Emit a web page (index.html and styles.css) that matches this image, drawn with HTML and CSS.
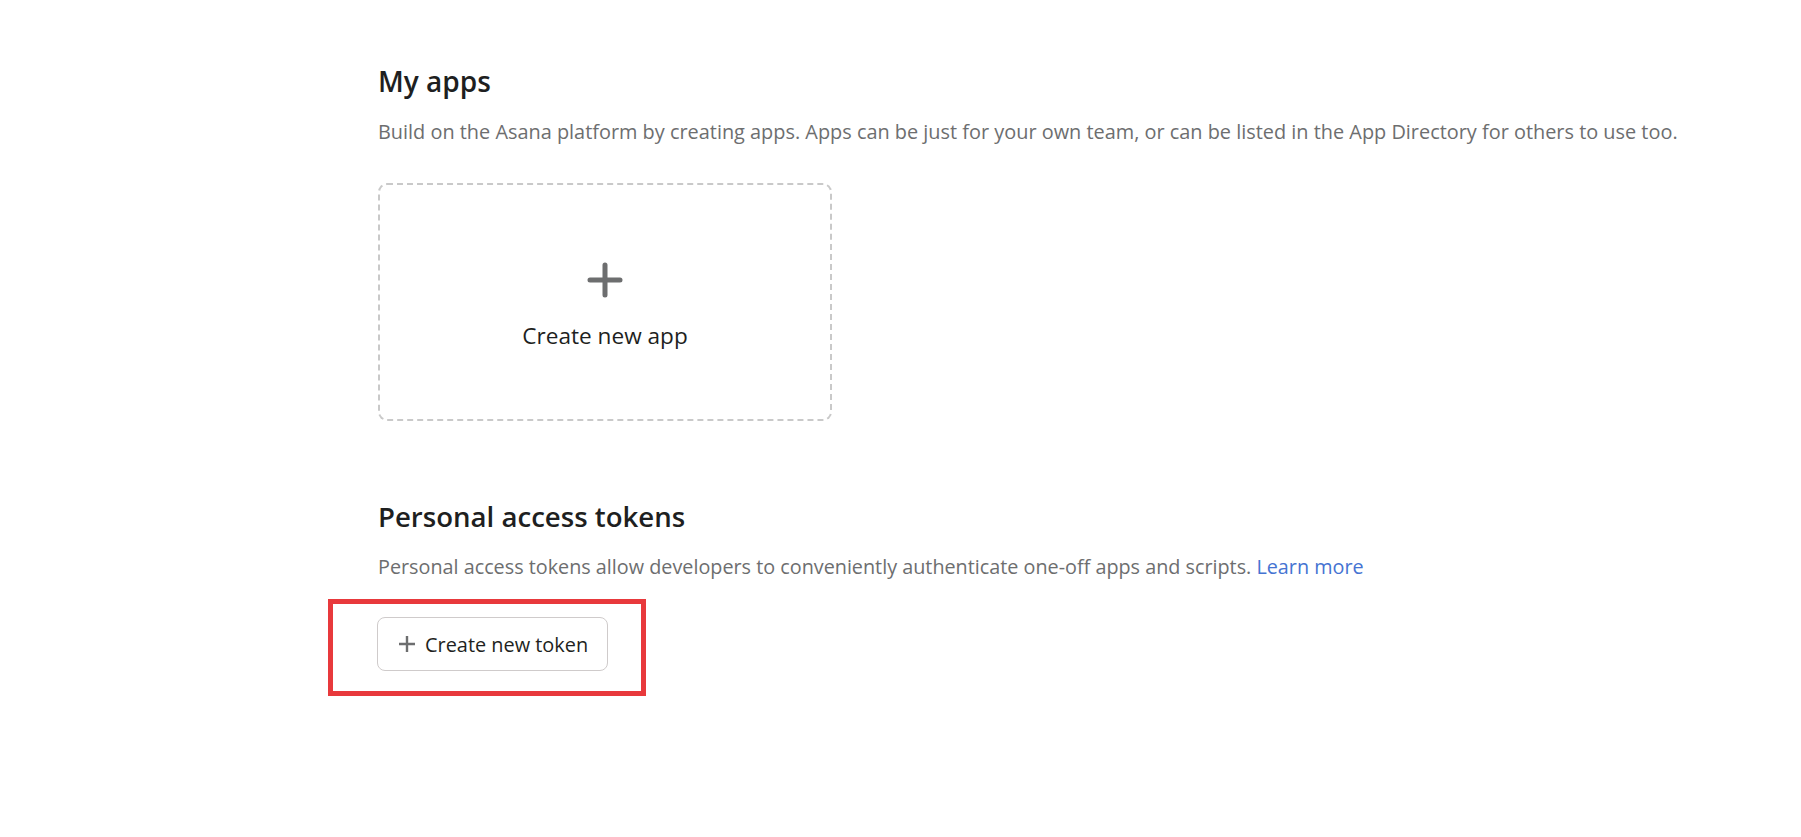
FILE: index.html
```html
<!DOCTYPE html>
<html lang="en">
<head>
    <meta charset="UTF-8">
    <meta name="viewport" content="width=device-width, initial-scale=1.0">
    <title>Developer console</title>
    <link rel="stylesheet" href="styles.css">
</head>
<body>
    <div class="page">
        <section class="section section-apps">
            <h2>My apps</h2>
            <p class="desc">Build on the Asana platform by creating apps. Apps can be just for your own team, or can be listed in the App Directory for others to use too.</p>
            <button class="new-app">
                <svg class="big-plus" width="36" height="36" viewBox="0 0 36 36">
                    <path d="M18 3 V33 M3 18 H33" stroke="#6d6e6f" stroke-width="5" stroke-linecap="round" fill="none"/>
                </svg>
                <span>Create new app</span>
            </button>
        </section>
        <section class="section section-tokens">
            <h2>Personal access tokens</h2>
            <p class="desc">Personal access tokens allow developers to conveniently authenticate one-off apps and scripts. <a href="#">Learn more</a></p>
            <div class="highlight">
                <button class="btn-token">
                    <svg width="18" height="18" viewBox="0 0 18 18">
                        <path d="M9 1 V17 M1 9 H17" stroke="#6d6e6f" stroke-width="2.4" fill="none"/>
                    </svg>
                    <span>Create new token</span>
                </button>
            </div>
        </section>
    </div>
</body>
</html>
```

FILE: styles.css
```css
body {
    margin: 0;
    background: #fff;
    font-family: "Open Sans", "Noto Sans", sans-serif;
    color: #1e1f21;
}
.page {
    padding: 65px 0 0 378px;
}
h2 {
    margin: 0;
    font-size: 28px;
    line-height: 32px;
    font-weight: 600;
    color: #1e1f21;
}
.section-tokens h2 {
    font-size: 27.6px;
}
.desc {
    margin: 23px 0 0;
    font-size: 19.9px;
    line-height: 24px;
    color: #6d6e6f;
}
.section-tokens .desc {
    font-size: 19.8px;
}
.desc a {
    color: #4573d2;
    text-decoration: none;
}
.new-app {
    margin-top: 39px;
    width: 454px;
    height: 238px;
    box-sizing: border-box;
    border: 2px dashed #c9c9c9;
    border-radius: 9px;
    background: #fff;
    display: flex;
    flex-direction: column;
    align-items: center;
    justify-content: center;
    gap: 22px;
    font-family: inherit;
    font-size: 22.6px;
    color: #1e1f21;
    cursor: pointer;
    padding: 8px 0 0;
}
.section-tokens {
    margin-top: 79px;
}
.highlight {
    display: inline-block;
    margin: 20px 0 0 -50px;
    padding: 13px 33px 20px 44px;
    border: 5px solid #e8393c;
}
.btn-token {
    display: flex;
    align-items: center;
    gap: 9px;
    height: 54px;
    padding: 0 19px 0 20px;
    border: 1px solid #cfcbcb;
    border-radius: 8px;
    background: #fff;
    font-family: inherit;
    font-size: 19.9px;
    color: #1e1f21;
    cursor: pointer;
}
```
